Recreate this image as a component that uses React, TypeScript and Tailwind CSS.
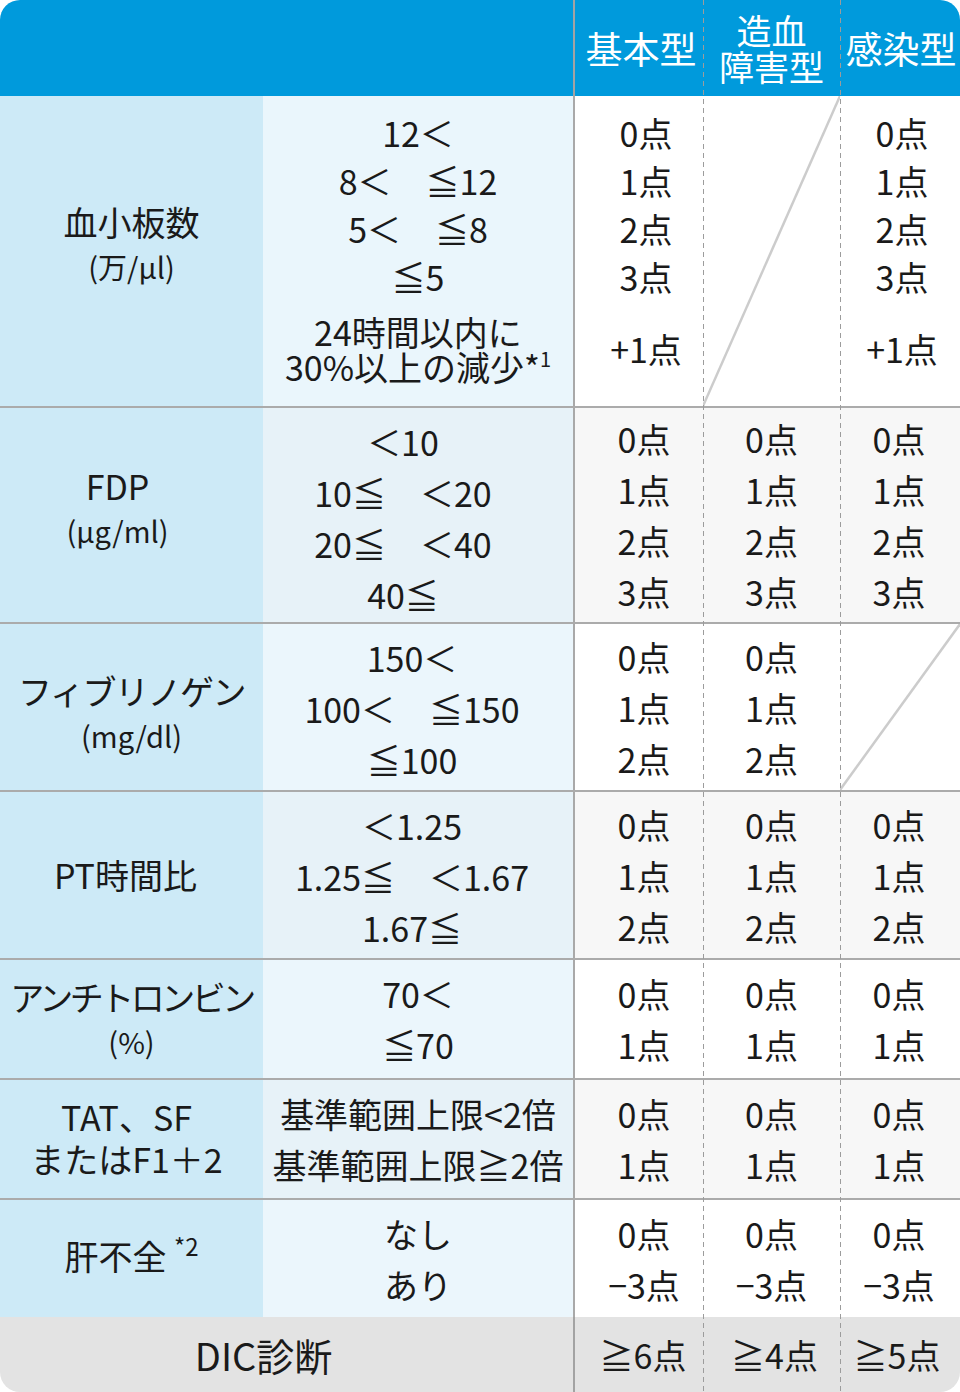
import React from 'react';

// column widths: label 263 / range 312 (incl. 2px rule) / 128 / 137 / 120
const rowGrid = 'grid grid-cols-[263px_312px_128px_137px_120px]';

const Lines = ({ items, lh }: { items: React.ReactNode[]; lh: string }) => (
  <>
    {items.map((item, i) => (
      <div key={i} className={`${lh} whitespace-nowrap`}>
        {item}
      </div>
    ))}
  </>
);

const Label = ({ main, sub, pad, mainCls }: { main: React.ReactNode; sub?: React.ReactNode; pad?: string; mainCls?: string }) => (
  <div className={`flex flex-col items-center justify-center bg-[#cdeaf7] text-center ${pad ?? ''}`}>
    <div className={`text-[34px] leading-[44px] whitespace-nowrap ${mainCls ?? ''}`}>{main}</div>
    {sub && <div className="text-[29px] leading-[44px] whitespace-nowrap">{sub}</div>}
  </div>
);

const Diagonal = () => (
  <svg className="pointer-events-none absolute inset-0 h-full w-full" xmlns="http://www.w3.org/2000/svg">
    <line x1="100%" y1="0" x2="0" y2="100%" stroke="#cccccc" strokeWidth="2.5" />
  </svg>
);

type Row = {
  label: React.ReactNode;
  ranges: React.ReactNode[];
  rangePad?: string;
  scores: (React.ReactNode[] | null)[];
  height: string;
  alt: boolean;
  last?: boolean;
};

const rows: Row[] = [
  {
    label: <Label main="FDP" sub="(μg/ml)" pad="pb-[14px] pr-[28px]" />,
    ranges: ['＜10', '10≦　＜20', '20≦　＜40', '40≦'],
    rangePad: 'pt-[5px] pr-[30px]',
    scores: [
      ['0点', '1点', '2点', '3点'],
      ['0点', '1点', '2点', '3点'],
      ['0点', '1点', '2点', '3点'],
    ],
    height: 'h-[216px]',
    alt: true,
  },
  {
    label: <Label main="フィブリノゲン" sub="(mg/dl)" pad="pt-[12px]" mainCls="tracking-[-1.5px]" />,
    ranges: ['150＜', '100＜　≦150', '≦100'],
    rangePad: 'pt-[2px] pr-[12px]',
    scores: [['0点', '1点', '2点'], ['0点', '1点', '2点'], null],
    height: 'h-[168px]',
    alt: false,
  },
  {
    label: <Label main="PT時間比" pad="pr-[12px]" />,
    ranges: ['＜1.25', '1.25≦　＜1.67', '1.67≦'],
    rangePad: 'pt-[2px] pr-[12px]',
    scores: [
      ['0点', '1点', '2点'],
      ['0点', '1点', '2点'],
      ['0点', '1点', '2点'],
    ],
    height: 'h-[168px]',
    alt: true,
  },
  {
    label: <Label main="アンチトロンビン" sub="(%)" mainCls="tracking-[-3.5px]" />,
    ranges: ['70＜', '≦70'],
    scores: [
      ['0点', '1点'],
      ['0点', '1点'],
      ['0点', '1点'],
    ],
    height: 'h-[120px]',
    alt: false,
  },
  {
    label: (
      <div className="flex flex-col items-center justify-center bg-[#cdeaf7] pb-[2px] pr-[10px] text-center text-[34px]">
        <div className="leading-[42px] whitespace-nowrap">TAT、SF</div>
        <div className="leading-[42px] whitespace-nowrap">またはF1＋2</div>
      </div>
    ),
    ranges: ['基準範囲上限<2倍', '基準範囲上限≧2倍'],
    scores: [
      ['0点', '1点'],
      ['0点', '1点'],
      ['0点', '1点'],
    ],
    height: 'h-[120px]',
    alt: true,
  },
  {
    label: (
      <div className="flex items-center justify-center bg-[#cdeaf7] pb-[6px] text-[34px]">
        <span className="whitespace-nowrap">
          肝不全 <sup className="relative -top-[14px] text-[24px]">*2</sup>
        </span>
      </div>
    ),
    ranges: ['なし', 'あり'],
    scores: [
      ['0点', '−3点'],
      ['0点', '−3点'],
      ['0点', '−3点'],
    ],
    height: 'h-[117px]',
    alt: false,
    last: true,
  },
];

export default function App() {
  return (
    <div className="relative h-[1392px] w-[960px] overflow-hidden rounded-[20px] bg-white font-['Noto_Sans_CJK_JP','Noto_Sans',sans-serif] text-[#1a1a1a]">
      {/* header */}
      <div className={`${rowGrid} h-[96px] bg-[#009adc] text-white`}>
        <div />
        <div className="border-r-2 border-[#a3a3a3]" />
        <div className="flex items-center justify-center pl-[4px] text-[37px] leading-none whitespace-nowrap">基本型</div>
        <div className="flex flex-col items-center justify-center text-[35px] leading-[36px] whitespace-nowrap">
          <div>造血</div>
          <div>障害型</div>
        </div>
        <div className="flex items-center justify-center pl-[2px] text-[37px] leading-none whitespace-nowrap">感染型</div>
      </div>

      {/* platelets */}
      <div className={`${rowGrid} h-[312px] border-b-2 border-[#ababab] text-[34px]`}>
        <Label main="血小板数" sub="(万/μl)" pad="pb-[14px]" />
        <div className="flex flex-col items-center justify-center border-r-2 border-[#a9a9a9] bg-[#eaf6fc] pb-[10px] text-center">
          <Lines items={['12＜', '8＜　≦12', '5＜　≦8', '≦5']} lh="leading-[48px]" />
          <div className="mt-[13px] leading-[35px]">
            <div className="whitespace-nowrap">24時間以内に</div>
            <div className="whitespace-nowrap">
              30%以上の減少*<sup className="relative -top-[14px] text-[20px]">1</sup>
            </div>
          </div>
        </div>
        <div className="flex flex-col items-center justify-center bg-white pb-[10px] pl-[14px]">
          <Lines items={['0点', '1点', '2点', '3点']} lh="leading-[48px]" />
          <div className="mt-[13px] flex h-[70px] items-center whitespace-nowrap">+1点</div>
        </div>
        <div className="relative bg-white">
          <Diagonal />
        </div>
        <div className="flex flex-col items-center justify-center bg-white pb-[10px] pl-[4px]">
          <Lines items={['0点', '1点', '2点', '3点']} lh="leading-[48px]" />
          <div className="mt-[13px] flex h-[70px] items-center whitespace-nowrap">+1点</div>
        </div>
      </div>

      {rows.map((row, i) => (
        <div
          key={i}
          className={`${rowGrid} ${row.height} ${row.last ? '' : 'border-b-2 border-[#ababab]'} text-[34px]`}
        >
          {row.label}
          <div
            className={`flex flex-col items-center justify-center border-r-2 border-[#a9a9a9] text-center ${
              row.alt ? 'bg-[#e7f2f8]' : 'bg-[#ebf6fc]'
            } ${row.rangePad ?? ''}`}
          >
            <Lines items={row.ranges} lh="leading-[51px]" />
          </div>
          {row.scores.map((s, j) => (
            <div
              key={j}
              className={`relative flex flex-col items-center justify-center ${row.alt ? 'bg-[#f7f7f7]' : 'bg-white'} ${
                j === 0 ? 'pl-[10px]' : j === 2 ? 'pr-[2px]' : ''
              }`}
            >
              {s ? <Lines items={s} lh="leading-[51px]" /> : <Diagonal />}
            </div>
          ))}
        </div>
      ))}

      {/* result */}
      <div className={`${rowGrid} h-[75px] bg-[#e3e3e3] text-[34px]`}>
        <div className="col-span-2 flex items-center justify-center border-r-2 border-[#a3a3a3] pr-[46px] text-[38px] whitespace-nowrap">
          DIC診断
        </div>
        <div className="flex items-center justify-center pl-[8px] whitespace-nowrap">≧6点</div>
        <div className="flex items-center justify-center pl-[6px] whitespace-nowrap">≧4点</div>
        <div className="flex items-center justify-center pr-[6px] whitespace-nowrap">≧5点</div>
      </div>

      {/* dashed column rules */}
      <div className="pointer-events-none absolute bottom-0 left-[703px] top-0 w-px bg-[repeating-linear-gradient(to_bottom,#9c9c9c_0px,#9c9c9c_5px,transparent_5px,transparent_9px)]" />
      <div className="pointer-events-none absolute bottom-0 left-[840px] top-0 w-px bg-[repeating-linear-gradient(to_bottom,#9c9c9c_0px,#9c9c9c_5px,transparent_5px,transparent_9px)]" />
    </div>
  );
}
